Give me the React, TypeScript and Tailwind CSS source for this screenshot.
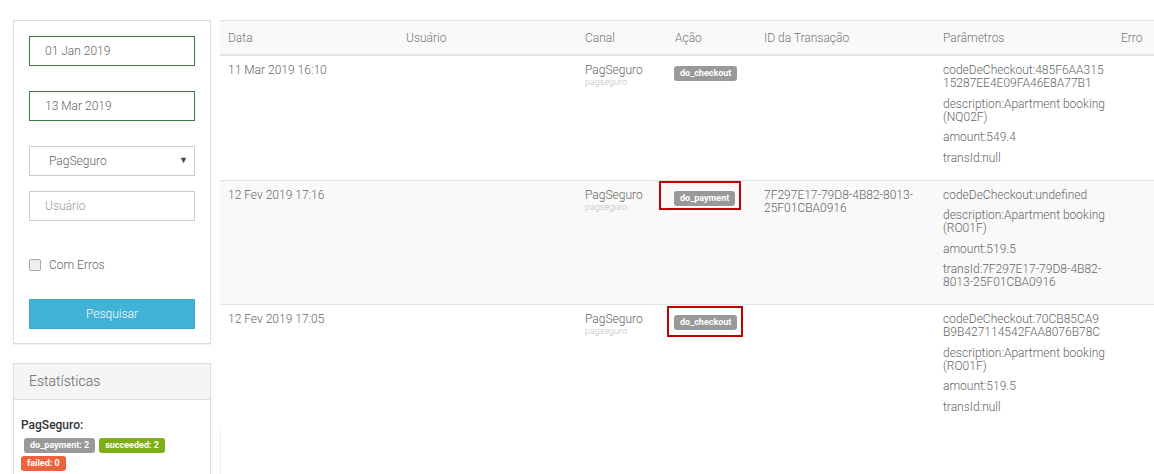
import React from 'react';

type Row = {
  date: string;
  action: string;
  transId: string;
  params: string[];
  mark?: { l: number; t: number; r: number; b: number };
  striped?: boolean;
};

const rows: Row[] = [
  {
    date: '11 Mar 2019 16:10',
    action: 'do_checkout',
    transId: '',
    params: [
      'codeDeCheckout:485F6AA31515287EE4E09FA46E8A77B1',
      'description:Apartment booking (NQ02F)',
      'amount:549.4',
      'transId:null',
    ],
  },
  {
    date: '12 Fev 2019 17:16',
    action: 'do_payment',
    transId: '7F297E17-79D8-4B82-8013-25F01CBA0916',
    params: [
      'codeDeCheckout:undefined',
      'description:Apartment booking (RO01F)',
      'amount:519.5',
      'transId:7F297E17-79D8-4B82-8013-25F01CBA0916',
    ],
    mark: { l: 15, t: 7, r: 6, b: 4 },
    striped: true,
  },
  {
    date: '12 Fev 2019 17:05',
    action: 'do_checkout',
    transId: '',
    params: [
      'codeDeCheckout:70CB85CA9B9B427114542FAA8076B78C',
      'description:Apartment booking (RO01F)',
      'amount:519.5',
      'transId:null',
    ],
    mark: { l: 7, t: 6, r: 6, b: 7 },
  },
];

const cols = 'grid grid-cols-[178px_179px_90px_89px_179px_178px_1fr]';

const Label = ({ text, color }: { text: string; color: string }) => (
  <span className={`inline-block rounded-[3px] px-[6px] py-[3px] text-[9px] font-bold leading-[9px] text-white ${color}`}>
    {text}
  </span>
);

const App: React.FC = () => {
  return (
    <div className="flex w-[1154px] h-[474px] overflow-hidden bg-white text-[12px] text-[#666] font-['Roboto',sans-serif]">
      {/* sidebar */}
      <div className="ml-[13px] mt-[20px] w-[198px] shrink-0 flex flex-col gap-[19px]">
        <div className="border border-[#ddd] shadow-[0_1px_1px_rgba(0,0,0,0.05)] p-[15px] pb-[14px] flex flex-col">
          <div className="h-[30px] border border-[#3d7a3d] px-[15px] flex items-center font-light">01 Jan 2019</div>
          <div className="h-[30px] mt-[25px] border border-[#3d7a3d] px-[15px] flex items-center font-light">13 Mar 2019</div>
          <div className="h-[30px] mt-[25px] border border-[#ccc] pl-[19px] pr-[6px] flex items-center justify-between font-light">
            <span>PagSeguro</span>
            <span className="text-[9px] text-[#444]">▼</span>
          </div>
          <div className="h-[30px] mt-[15px] border border-[#ccc] px-[15px] flex items-center font-light text-[#999]">Usuário</div>
          <div className="mt-[35px] flex items-center gap-[8px] font-light">
            <span className="w-[12px] h-[12px] rounded-[2px] border border-[#aaa] bg-[#eee]" />
            <span>Com Erros</span>
          </div>
          <div className="h-[30px] mt-[25px] bg-[#41b3d6] border border-[#3aaad0] flex items-center justify-center text-white font-light">
            Pesquisar
          </div>
        </div>

        <div className="border border-[#ddd] flex-1">
          <div className="h-[36px] bg-[#f5f5f5] border-b border-[#ddd] px-[15px] flex items-center text-[14px] font-light">
            Estatísticas
          </div>
          <div className="px-[7px] pt-[16px]">
            <div className="text-[12px] font-medium text-[#333]">PagSeguro:</div>
            <div className="mt-[4px] pl-[3px] flex gap-x-[4px]">
              <Label text="do_payment: 2" color="bg-[#999]" />
              <Label text="succeeded: 2" color="bg-[#7dae15]" />
            </div>
            <div className="mt-[3px] flex">
              <Label text="failed: 0" color="bg-[#f0613d]" />
            </div>
            <div className="mt-[3px] pl-[3px] flex gap-x-[4px]">
              <Label text="do_checkout: 2" color="bg-[#999]" />
              <Label text="succeeded: 2" color="bg-[#7dae15]" />
            </div>
          </div>
        </div>
      </div>

      {/* table */}
      <div className="ml-[9px] mt-[20px] flex-1 flex flex-col font-light">
        <div className={`${cols} h-[36px] shrink-0 items-center bg-[#f9f9f9] border-t border-b-2 border-[#e4e4e4] text-[#777]`}>
          {['Data', 'Usuário', 'Canal', 'Ação', 'ID da Transação', 'Parâmetros', 'Erro'].map(h => (
            <div key={h} className="px-[8px]">{h}</div>
          ))}
        </div>
        {rows.map((r, i) => (
          <div
            key={i}
            className={`${cols} shrink-0 ${i < rows.length - 1 ? 'border-b border-[#e4e4e4]' : ''} ${r.striped ? 'bg-[#f9f9f9]' : 'bg-white'}`}
          >
            <div className="px-[8px] pt-[8px] leading-[13px]">{r.date}</div>
            <div className="px-[8px] pt-[8px]" />
            <div className="px-[8px] pt-[8px] leading-[13px]">
              <div>PagSeguro</div>
              <div className="text-[9px] leading-[10px] text-[#bbb]">pagseguro</div>
            </div>
            <div className="px-[7px] pt-[7px]">
              <span className="relative inline-block">
                <span className="inline-block rounded-[3px] bg-[#999] px-[6px] py-[3px] text-[9px] font-bold leading-[9px] text-white">
                  {r.action}
                </span>
                {r.mark && (
                  <span
                    className="absolute border-2 border-[#c00000]"
                    style={{ left: -r.mark.l, top: -r.mark.t, right: -r.mark.r, bottom: -r.mark.b }}
                  />
                )}
              </span>
            </div>
            <div className="px-[8px] pt-[8px] leading-[13px]">{r.transId}</div>
            <div className="px-[8px] pt-[8px] pb-[7.5px] leading-[13px] [overflow-wrap:anywhere]">
              {r.params.map(p => (
                <p key={p} className="mb-[7.5px]">{p}</p>
              ))}
            </div>
            <div className="px-[8px]" />
          </div>
        ))}
        <div className="flex-1 border-l border-[#f0f0f0]" />
      </div>
    </div>
  );
};

export default App;
